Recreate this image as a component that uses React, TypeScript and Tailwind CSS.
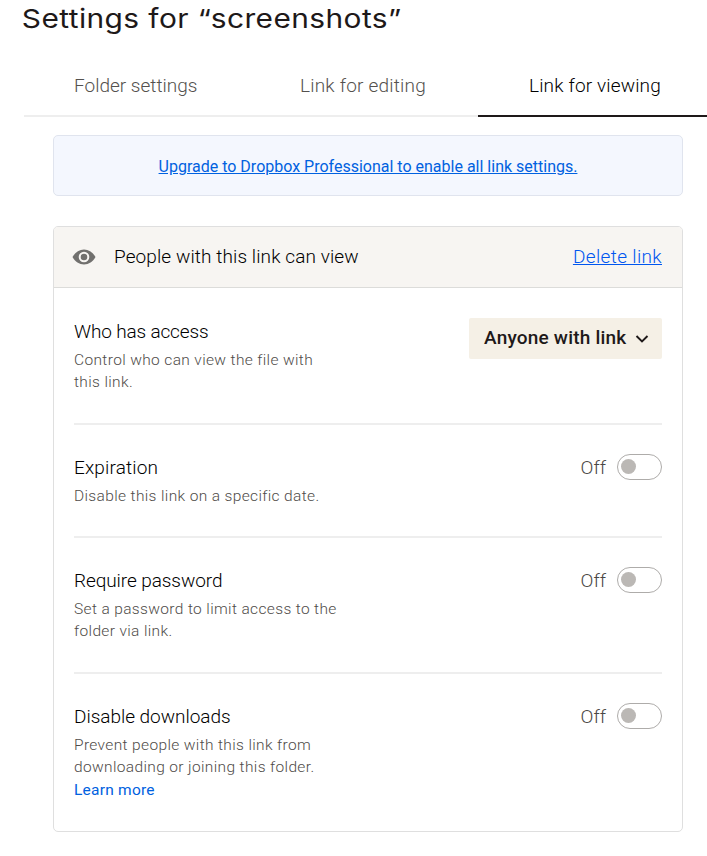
import React from "react";
import { useState } from "react";

const tabs = [
  {
    label: "Folder settings",
    className: "w-[226px] pl-[50px]",
  },
  {
    label: "Link for editing",
    className: "w-[228px] pl-[50px] tracking-[0.2px]",
  },
  {
    label: "Link for viewing",
    className: "w-[229px] pl-[51px] tracking-[0.15px]",
  },
];

function EyeIcon() {
  return (
    <svg width="24" height="16" viewBox="0 0 24 16" fill="none">
      <path
        d="M0.5 8C3.2 3.2 7.2 0.6 12 0.6S20.8 3.2 23.5 8C20.8 12.8 16.8 15.4 12 15.4S3.2 12.8 0.5 8Z"
        fill="#71706e"
      />
      <circle cx="12" cy="8" r="4.3" stroke="#f7f5f2" strokeWidth="2" />
    </svg>
  );
}

function Toggle() {
  const [on, setOn] = useState(false);

  return (
    <div className="flex items-center">
      <span className="mr-[11px] pt-px text-[19px] leading-6 font-light text-[#4b4845]">
        {on ? "On" : "Off"}
      </span>
      <button
        onClick={() => setOn(!on)}
        className={`flex h-[26px] w-[45px] items-center rounded-full border border-[#aeacaa] px-[3px] ${
          on ? "justify-end" : ""
        }`}
      >
        <span className="mb-px size-[15px] rounded-full bg-[#bbb8b5]" />
      </button>
    </div>
  );
}

type RowProps = {
  title: string;
  lines: string[];
  className: string;
  titleClass?: string;
  children: React.ReactNode;
  link?: string;
};

function Row({ title, lines, className, titleClass, children, link }: RowProps) {
  return (
    <div className={`flex items-start justify-between ${className}`}>
      <div>
        <p
          className={`pt-px text-[19px] leading-[26px] font-light text-black ${titleClass ?? ""}`}
        >
          {title}
        </p>
        <div className="mt-[3.5px] text-[15.5px] leading-[22.5px] font-light tracking-[0.36px] text-[#4f4c49]">
          {lines.map((line) => (
            <p key={line}>{line}</p>
          ))}
          {link && (
            <a className="block font-normal tracking-[0.24px] text-[#0061e0]">
              {link}
            </a>
          )}
        </div>
      </div>
      {children}
    </div>
  );
}

export default function App() {
  const [active, setActive] = useState(2);

  return (
    <div className="h-[856px] w-[707px] overflow-hidden bg-white font-[Roboto,sans-serif]">
      <h1 className="h-[55px] origin-left scale-x-115 pl-[19px] font-[Inter,sans-serif] text-[26px] leading-[37px] tracking-[0.35px] whitespace-nowrap text-[#1e1919]">
        Settings for “screenshots”
      </h1>
      <div className="ml-6 flex h-[62px]">
        {tabs.map((tab, i) => (
          <button
            key={tab.label}
            onClick={() => setActive(i)}
            className={`border-b-2 pt-px text-left text-[19px] leading-[60px] font-light whitespace-nowrap ${tab.className} ${
              i === active
                ? "border-[#1e1919] text-black"
                : "border-[#eeeeee] text-[#54514e]"
            }`}
          >
            {tab.label}
          </button>
        ))}
      </div>

      <div className="mt-[18px] ml-[53px] flex h-[61px] w-[630px] items-center justify-center rounded-[5px] border border-[#e0e4ee] bg-[#f4f7fe] pt-[2px]">
        <a className="text-[16px] text-[#0061e0] underline">
          Upgrade to Dropbox Professional to enable all link settings.
        </a>
      </div>

      <div className="mt-[30px] ml-[53px] h-[606px] w-[630px] overflow-hidden rounded-[5px] border border-[#dfdfdf]">
        <div className="flex h-[61px] items-center border-b border-[#dcdcda] bg-[#f7f5f2] pr-5 pl-[18px] text-[19px] font-light">
          <EyeIcon />
          <p className="ml-[18px] tracking-[0.1px] text-black">
            People with this link can view
          </p>
          <a className="ml-auto tracking-[0.35px] text-[#0056f0] underline">
            Delete link
          </a>
        </div>
        <div className="px-5">
          <Row
            title="Who has access"
            titleClass="tracking-[-0.15px]"
            lines={["Control who can view the file with", "this link."]}
            className="h-[137px] border-b-2 border-[#eeeeee] pt-[30px]"
          >
            <button className="flex h-[41px] w-[193px] items-center justify-between rounded-[2px] bg-[#f5f0e6] pr-[13px] pl-[15px] text-[19px] font-medium tracking-[0.2px] whitespace-nowrap text-[#1e1919]">
              Anyone with link
              <svg width="14" height="10" viewBox="0 0 14 10" fill="none">
                <path d="M1.5 2L7 7.5L12.5 2" stroke="#1e1919" strokeWidth="1.9" />
              </svg>
            </button>
          </Row>
          <Row
            title="Expiration"
            titleClass="tracking-[0.15px]"
            lines={["Disable this link on a specific date."]}
            className="h-[113px] border-b-2 border-[#eeeeee] pt-[29px]"
          >
            <Toggle />
          </Row>
          <Row
            title="Require password"
            titleClass="tracking-[-0.08px]"
            lines={["Set a password to limit access to the", "folder via link."]}
            className="h-[136px] border-b-2 border-[#eeeeee] pt-[29px]"
          >
            <Toggle />
          </Row>
          <Row
            title="Disable downloads"
            titleClass="tracking-[-0.03px]"
            lines={[
              "Prevent people with this link from",
              "downloading or joining this folder.",
            ]}
            link="Learn more"
            className="pt-[29px]"
          >
            <Toggle />
          </Row>
        </div>
      </div>
    </div>
  );
}
